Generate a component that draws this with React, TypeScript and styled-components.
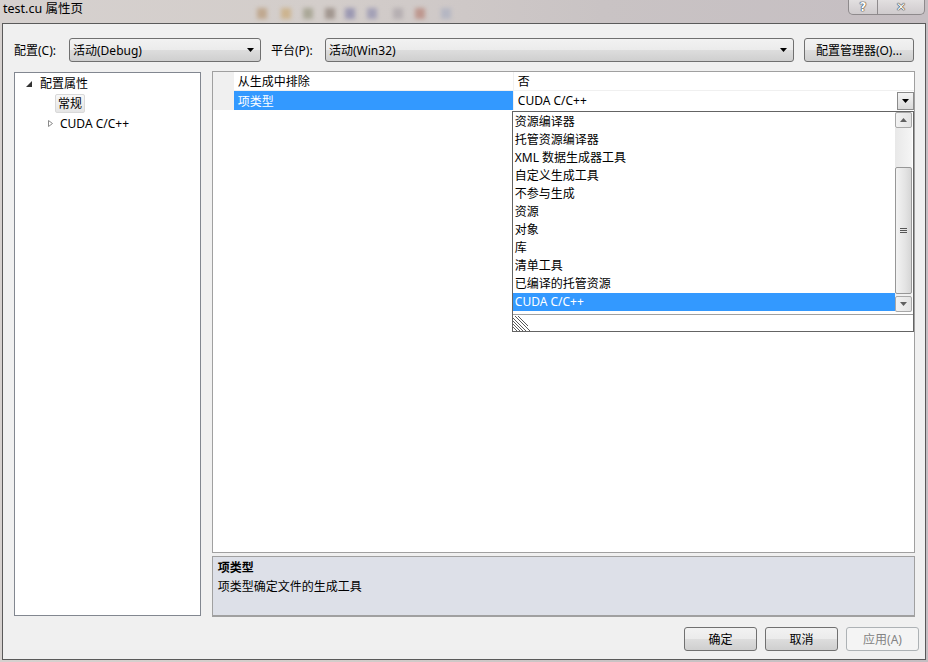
import styled, { createGlobalStyle } from 'styled-components';

const GlobalStyle = createGlobalStyle`
  html, body { margin: 0; padding: 0; }
  body {
    width: 928px;
    height: 662px;
    overflow: hidden;
    font-family: "Noto Sans", "Noto Sans CJK SC", sans-serif;
    font-size: 12px;
    color: #000;
  }
`;

const Window = styled.div`
  width: 928px;
  height: 662px;
  display: flex;
  flex-direction: column;
  background: linear-gradient(90deg, #d6d1cf 0%, #d3cdca 35%, #c9c3c4 65%, #c5bec2 100%);
`;

const TitleBar = styled.div`
  height: 23px;
  display: flex;
  align-items: flex-start;
`;

const Title = styled.div`
  width: 247px;
  padding-left: 3px;
  line-height: 18px;
  font-size: 12.5px;
  white-space: nowrap;
`;

const GlassArt = styled.svg`
  width: 230px;
  height: 23px;
  flex: none;
`;

const Spacer = styled.div`
  flex: 1;
`;

const CaptionGroup = styled.div`
  display: flex;
  margin-right: 3px;
  border: 1px solid #8e8a8c;
  border-top: none;
  border-radius: 0 0 5px 5px;
  overflow: hidden;
  background: linear-gradient(180deg, #e2dfe0, #cfcbcd);
`;

const CaptionButton = styled.div<{ $w: number; $last?: boolean }>`
  width: ${(p) => p.$w}px;
  height: 14px;
  display: flex;
  align-items: center;
  justify-content: center;
  border-left: ${(p) => (p.$last ? '1px solid #8e8a8c' : 'none')};
  font-family: "DejaVu Sans", sans-serif;
  font-size: 12px;
  font-weight: bold;
  color: #fff;
  text-shadow: 0 0 1px #333, 0 0 1px #333, 0 0 1px #333;
`;

const Client = styled.div`
  flex: 1;
  margin: 0 2px 2px 2px;
  border: 1px solid #5a5a5a;
  background: #f0f0f0;
  padding: 14px 6px 0 11px;
  display: flex;
  flex-direction: column;
`;

const ConfigRow = styled.div`
  height: 24px;
  display: flex;
  align-items: center;
  margin-right: 4px;
`;

const Label = styled.span<{ $w: number; $gap?: number }>`
  width: ${(p) => p.$w}px;
  margin-left: ${(p) => p.$gap || 0}px;
  white-space: nowrap;
`;

const Combo = styled.div<{ $w: number }>`
  width: ${(p) => p.$w}px;
  height: 24px;
  box-sizing: border-box;
  border: 1px solid #707070;
  border-radius: 3px;
  background: linear-gradient(180deg, #f2f2f2 0%, #ebebeb 50%, #dddddd 51%, #cfcfcf 100%);
  display: flex;
  align-items: center;
  padding: 0 6px 0 3px;
`;

const ComboText = styled.span`
  flex: 1;
`;

const PushButton = styled.div<{ $w: number; $disabled?: boolean }>`
  width: ${(p) => p.$w}px;
  height: 24px;
  box-sizing: border-box;
  border: 1px solid ${(p) => (p.$disabled ? '#adb2b5' : '#707070')};
  border-radius: 3px;
  background: ${(p) =>
    p.$disabled
      ? '#f4f4f4'
      : 'linear-gradient(180deg, #f2f2f2 0%, #ebebeb 50%, #dddddd 51%, #cfcfcf 100%)'};
  color: ${(p) => (p.$disabled ? '#838383' : '#000')};
  display: flex;
  align-items: center;
  justify-content: center;
  white-space: nowrap;
`;

const ManagerButton = styled(PushButton)`
  margin-left: 10px;
`;

const Main = styled.div`
  margin-top: 9px;
  margin-right: 4px;
  height: 546px;
  display: flex;
  gap: 11px;
`;

const Tree = styled.div`
  width: 187px;
  height: 544px;
  box-sizing: border-box;
  border: 1px solid #828790;
  background: #fff;
  margin-top: 1px;
`;

const TreeRow = styled.div<{ $indent: number }>`
  height: 20px;
  display: flex;
  align-items: center;
  padding-left: ${(p) => p.$indent}px;
`;

const Expander = styled.svg`
  width: 9px;
  height: 9px;
  margin-right: 5px;
  flex: none;
`;

const TreeText = styled.span`
  white-space: nowrap;
`;

const TreeSelected = styled.span`
  height: 19px;
  box-sizing: border-box;
  padding: 0 2px;
  display: flex;
  align-items: center;
  border: 1px solid #d9d9d9;
  border-radius: 2px;
  background: linear-gradient(180deg, #f8f8f8, #e5e5e5);
`;

const RightColumn = styled.div`
  width: 704px;
  display: flex;
  flex-direction: column;
  gap: 3px;
`;

const Grid = styled.div`
  position: relative;
  height: 483px;
  box-sizing: border-box;
  border: 1px solid #a0a0a0;
  background: #fff;
`;

const GridRow = styled.div<{ $selected?: boolean }>`
  height: 19px;
  display: grid;
  grid-template-columns: 21px 279px 1px 1fr;
  box-sizing: border-box;
  border-bottom: ${(p) => (p.$selected ? 'none' : '1px solid #f0f0f0')};
`;

const Gutter = styled.div`
  background: #f0f0f0;
`;

const NameCell = styled.div<{ $selected?: boolean }>`
  background: ${(p) => (p.$selected ? '#3399ff' : '#fff')};
  color: ${(p) => (p.$selected ? '#fff' : '#000')};
  padding-left: 4px;
  display: flex;
  align-items: center;
`;

const ColDivider = styled.div`
  background: #f0f0f0;
`;

const ValueCell = styled.div`
  padding-left: 4px;
  display: flex;
  align-items: center;
`;

const ValueText = styled.span`
  flex: 1;
`;

const DropButton = styled.div`
  width: 17px;
  height: 18px;
  box-sizing: border-box;
  border: 1px solid #8a8a8a;
  background: linear-gradient(180deg, #f4f4f4, #dadada);
  display: flex;
  align-items: center;
  justify-content: center;
`;

const DropList = styled.div`
  position: absolute;
  left: 299px;
  top: 39px;
  width: 402px;
  height: 221px;
  box-sizing: border-box;
  border: 1px solid #646464;
  background: #fff;
  display: flex;
  flex-direction: column;
  z-index: 2;
`;

const ListBody = styled.div`
  height: 200px;
  display: flex;
`;

const Items = styled.div`
  flex: 1;
  padding-top: 1px;
`;

const Item = styled.div<{ $selected?: boolean }>`
  height: 18px;
  line-height: 18px;
  padding-left: 2px;
  background: ${(p) => (p.$selected ? '#3399ff' : 'transparent')};
  color: ${(p) => (p.$selected ? '#fff' : '#000')};
  white-space: nowrap;
`;

const ScrollBar = styled.div`
  width: 17px;
  margin-right: 1px;
  display: flex;
  flex-direction: column;
  background: #f0f0f0;
`;

const ScrollArrow = styled.div`
  height: 16px;
  box-sizing: border-box;
  border: 1px solid #a8a8a8;
  border-radius: 2px;
  background: linear-gradient(90deg, #f2f2f2, #e3e3e3);
  display: flex;
  align-items: center;
  justify-content: center;
`;

const ScrollTrack = styled.div`
  height: 39px;
  background: linear-gradient(90deg, #e8e8e8, #f5f5f5);
`;

const ScrollThumb = styled.div`
  flex: 1;
  margin-bottom: 2px;
  box-sizing: border-box;
  border: 1px solid #979797;
  border-radius: 2px;
  background: linear-gradient(90deg, #f3f3f3, #e4e4e4 60%, #d6d6d6);
  display: flex;
  align-items: center;
  justify-content: center;
`;

const GripRow = styled.div`
  flex: 1;
  border-top: 1px solid #a0a0a0;
  margin-top: 2px;
  display: flex;
  align-items: flex-end;
`;

const Description = styled.div`
  height: 61px;
  box-sizing: border-box;
  border: 1px solid #a0a0a0;
  border-bottom-width: 2px;
  background: #dde0e8;
  padding: 1px 5px;
  line-height: 19px;
`;

const DescTitle = styled.div`
  font-weight: bold;
`;

const ButtonRow = styled.div`
  margin-top: 10px;
  display: flex;
  justify-content: flex-end;
  gap: 8px;
`;

const DownTri = ({ color = '#000' }: { color?: string }) => (
  <svg width="7" height="4" viewBox="0 0 7 4">
    <path d="M0 0h7L3.5 4z" fill={color} />
  </svg>
);

const UpTri = ({ color = '#000' }: { color?: string }) => (
  <svg width="7" height="4" viewBox="0 0 7 4">
    <path d="M0 4h7L3.5 0z" fill={color} />
  </svg>
);

const items = [
  '资源编译器',
  '托管资源编译器',
  'XML 数据生成器工具',
  '自定义生成工具',
  '不参与生成',
  '资源',
  '对象',
  '库',
  '清单工具',
  '已编译的托管资源',
];

// blurred toolbar icons showing through the glass title bar
const blobs = [
  { x: 12, c: '#b08a60' },
  { x: 36, c: '#c8a060' },
  { x: 58, c: '#8a8a70' },
  { x: 80, c: '#7a6a60' },
  { x: 100, c: '#7070a0' },
  { x: 122, c: '#8080a8' },
  { x: 148, c: '#a09aa0' },
  { x: 170, c: '#b07060' },
  { x: 196, c: '#a0a8c0' },
];

export default function App() {
  return (
    <Window>
      <GlobalStyle />
      <TitleBar>
        <Title>test.cu 属性页</Title>
        <GlassArt viewBox="0 0 230 23">
          <defs>
            <filter id="blur" x="-50%" y="-50%" width="200%" height="200%">
              <feGaussianBlur stdDeviation="2.2" />
            </filter>
          </defs>
          <g filter="url(#blur)" opacity="0.55">
            {blobs.map((b) => (
              <rect key={b.x} x={b.x - 5} y={8} width={10} height={11} fill={b.c} />
            ))}
          </g>
        </GlassArt>
        <Spacer />
        <CaptionGroup>
          <CaptionButton $w={28}>?</CaptionButton>
          <CaptionButton $w={46} $last>
            ✕
          </CaptionButton>
        </CaptionGroup>
      </TitleBar>
      <Client>
        <ConfigRow>
          <Label $w={55}>配置(C):</Label>
          <Combo $w={192}>
            <ComboText>活动(Debug)</ComboText>
            <DownTri />
          </Combo>
          <Label $w={54} $gap={10}>
            平台(P):
          </Label>
          <Combo $w={469}>
            <ComboText>活动(Win32)</ComboText>
            <DownTri />
          </Combo>
          <ManagerButton $w={110}>配置管理器(O)...</ManagerButton>
        </ConfigRow>
        <Main>
          <Tree>
            <TreeRow $indent={11}>
              <Expander viewBox="0 0 9 9">
                <path d="M6 2v6H0z" fill="#333" />
              </Expander>
              <TreeText>配置属性</TreeText>
            </TreeRow>
            <TreeRow $indent={40}>
              <TreeSelected>常规</TreeSelected>
            </TreeRow>
            <TreeRow $indent={31}>
              <Expander viewBox="0 0 9 9">
                <path d="M2.5 1.5l4 3-4 3z" fill="none" stroke="#8a8a8a" />
              </Expander>
              <TreeText>CUDA C/C++</TreeText>
            </TreeRow>
          </Tree>
          <RightColumn>
            <Grid>
              <GridRow>
                <Gutter />
                <NameCell>从生成中排除</NameCell>
                <ColDivider />
                <ValueCell>
                  <ValueText>否</ValueText>
                </ValueCell>
              </GridRow>
              <GridRow $selected>
                <Gutter />
                <NameCell $selected>项类型</NameCell>
                <ColDivider />
                <ValueCell>
                  <ValueText>CUDA C/C++</ValueText>
                  <DropButton>
                    <DownTri />
                  </DropButton>
                </ValueCell>
              </GridRow>
              <DropList>
                <ListBody>
                  <Items>
                    {items.map((t) => (
                      <Item key={t}>{t}</Item>
                    ))}
                    <Item $selected>CUDA C/C++</Item>
                  </Items>
                  <ScrollBar>
                    <ScrollArrow>
                      <UpTri color="#606060" />
                    </ScrollArrow>
                    <ScrollTrack />
                    <ScrollThumb>
                      <svg width="7" height="7" viewBox="0 0 7 7">
                        <path d="M0 1.5h7M0 3.5h7M0 5.5h7" stroke="#555" strokeWidth="1" />
                      </svg>
                    </ScrollThumb>
                    <ScrollArrow>
                      <DownTri color="#606060" />
                    </ScrollArrow>
                  </ScrollBar>
                </ListBody>
                <GripRow>
                  <svg width="18" height="15" viewBox="0 0 18 15">
                    <path
                      d="M0 2l13 13M0 5l10 10M0 8l7 7M0 11l4 4M2 0l15 15M5 0l10 10"
                      stroke="#5a5a5a"
                      strokeWidth="1"
                    />
                  </svg>
                </GripRow>
              </DropList>
            </Grid>
            <Description>
              <DescTitle>项类型</DescTitle>
              <div>项类型确定文件的生成工具</div>
            </Description>
          </RightColumn>
        </Main>
        <ButtonRow>
          <PushButton $w={73}>确定</PushButton>
          <PushButton $w={73}>取消</PushButton>
          <PushButton $w={73} $disabled>
            应用(A)
          </PushButton>
        </ButtonRow>
      </Client>
    </Window>
  );
}
